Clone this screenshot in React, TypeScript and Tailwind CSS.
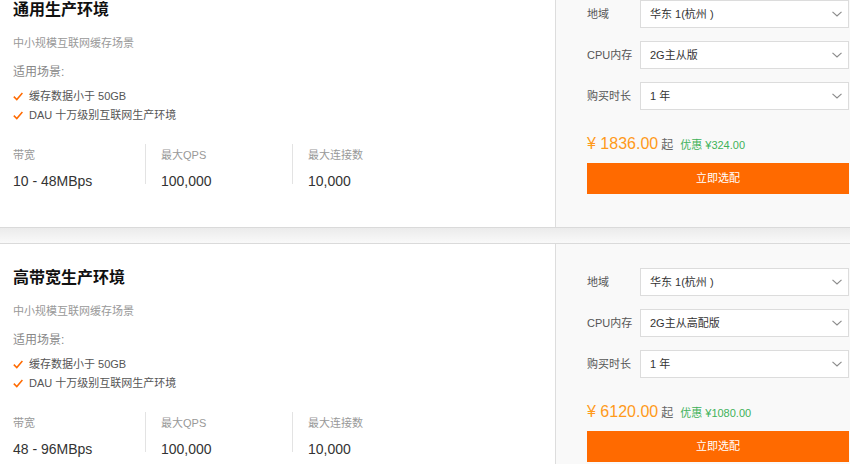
import React from "react";

type Plan = {
  title: string;
  desc: string;
  scenes: string[];
  bandwidth: string;
  qps: string;
  conns: string;
  spec: string;
  price: string;
  discount: string;
};

const plans: Plan[] = [
  {
    title: "通用生产环境",
    desc: "中小规模互联网缓存场景",
    scenes: ["缓存数据小于 50GB", "DAU 十万级别互联网生产环境"],
    bandwidth: "10 - 48MBps",
    qps: "100,000",
    conns: "10,000",
    spec: "2G主从版",
    price: "1836.00",
    discount: "¥324.00",
  },
  {
    title: "高带宽生产环境",
    desc: "中小规模互联网缓存场景",
    scenes: ["缓存数据小于 50GB", "DAU 十万级别互联网生产环境"],
    bandwidth: "48 - 96MBps",
    qps: "100,000",
    conns: "10,000",
    spec: "2G主从高配版",
    price: "6120.00",
    discount: "¥1080.00",
  },
];

function Check() {
  return (
    <svg width="10" height="9" viewBox="0 0 10 9" className="shrink-0">
      <polyline points="0.8,4.6 3.8,7.6 9.4,1" fill="none" stroke="#ff6a00" strokeWidth="1.5" />
    </svg>
  );
}

function Chevron() {
  return (
    <svg width="10" height="6" viewBox="0 0 10 6">
      <polyline points="0.5,0.8 5,5 9.5,0.8" fill="none" stroke="#8a8a8a" strokeWidth="1.1" />
    </svg>
  );
}

function SelectRow({ label, value }: { label: string; value: string }) {
  return (
    <div className="flex items-center">
      <span className="w-[53px] text-[11px] text-[#555]">{label}</span>
      <div className="flex h-[28px] w-[209px] items-center justify-between border border-[#dcdcdc] bg-white pl-[9px] pr-[6px] text-[11px] text-[#333]">
        <span>{value}</span>
        <Chevron />
      </div>
    </div>
  );
}

function Stat({ label, value, first }: { label: string; value: string; first?: boolean }) {
  return (
    <div className={first ? "h-[40px] w-[145px] pl-[13px]" : "h-[40px] w-[147px] border-l border-[#e3e3e3] pl-[15px]"}>
      <div className="mt-[3px] text-[11px] leading-4 text-[#999]">{label}</div>
      <div className="mt-2 text-[14px] leading-5 text-[#333]">{value}</div>
    </div>
  );
}

function PlanCard({ plan }: { plan: Plan }) {
  return (
    <div className="flex h-[253px] border-y border-y-[#dadada] bg-white">
      <div className="flex-1 border-r border-[#dddddd]">
        <div className="pl-[13px] pt-[22px]">
          <h3 className="text-[16px] font-bold leading-6 text-[#111]">{plan.title}</h3>
          <p className="mt-[13px] text-[11px] leading-4 text-[#999]">{plan.desc}</p>
          <p className="mt-[12px] text-[12px] leading-[18px] text-[#888]">适用场景:</p>
          <ul className="mt-[6px]">
            {plan.scenes.map((s) => (
              <li key={s} className="flex h-[19px] items-center gap-[6px] text-[11px] text-[#555]">
                <Check />
                <span>{s}</span>
              </li>
            ))}
          </ul>
        </div>
        <div className="mt-[19px] flex">
          <Stat first label="带宽" value={plan.bandwidth} />
          <Stat label="最大QPS" value={plan.qps} />
          <Stat label="最大连接数" value={plan.conns} />
        </div>
      </div>
      <div className="w-[294px] bg-[#f9f9f9] pl-[31px] pt-[24px]">
        <div className="flex flex-col gap-[13px]">
          <SelectRow label="地域" value="华东 1(杭州 )" />
          <SelectRow label="CPU内存" value={plan.spec} />
          <SelectRow label="购买时长" value="1 年" />
        </div>
        <div className="mt-[22px] flex h-6 items-center">
          <span className="text-[16px] text-[#ff9a1a]">¥ {plan.price}</span>
          <span className="ml-[3px] mt-[2px] text-[12px] text-[#666]">起</span>
          <span className="ml-[7px] mt-[2px] text-[11px] text-[#3fb25a]">优惠 {plan.discount}</span>
        </div>
        <button className="mt-[7px] flex h-[31px] w-[262px] items-center justify-center bg-[#ff6a00] text-[11px] text-white">
          立即选配
        </button>
      </div>
    </div>
  );
}

export default function App() {
  return (
    <div
      className="h-[464px] w-[850px] overflow-hidden bg-[#f7f7f7]"
      style={{ fontFamily: '"Liberation Sans", "Noto Sans CJK SC", sans-serif' }}
    >
      <div className="-mt-[25px]">
        <PlanCard plan={plans[0]} />
        <div className="h-[15px] bg-gradient-to-b from-[#ebebeb] to-[#f9f9f9]" />
        <PlanCard plan={plans[1]} />
      </div>
    </div>
  );
}
